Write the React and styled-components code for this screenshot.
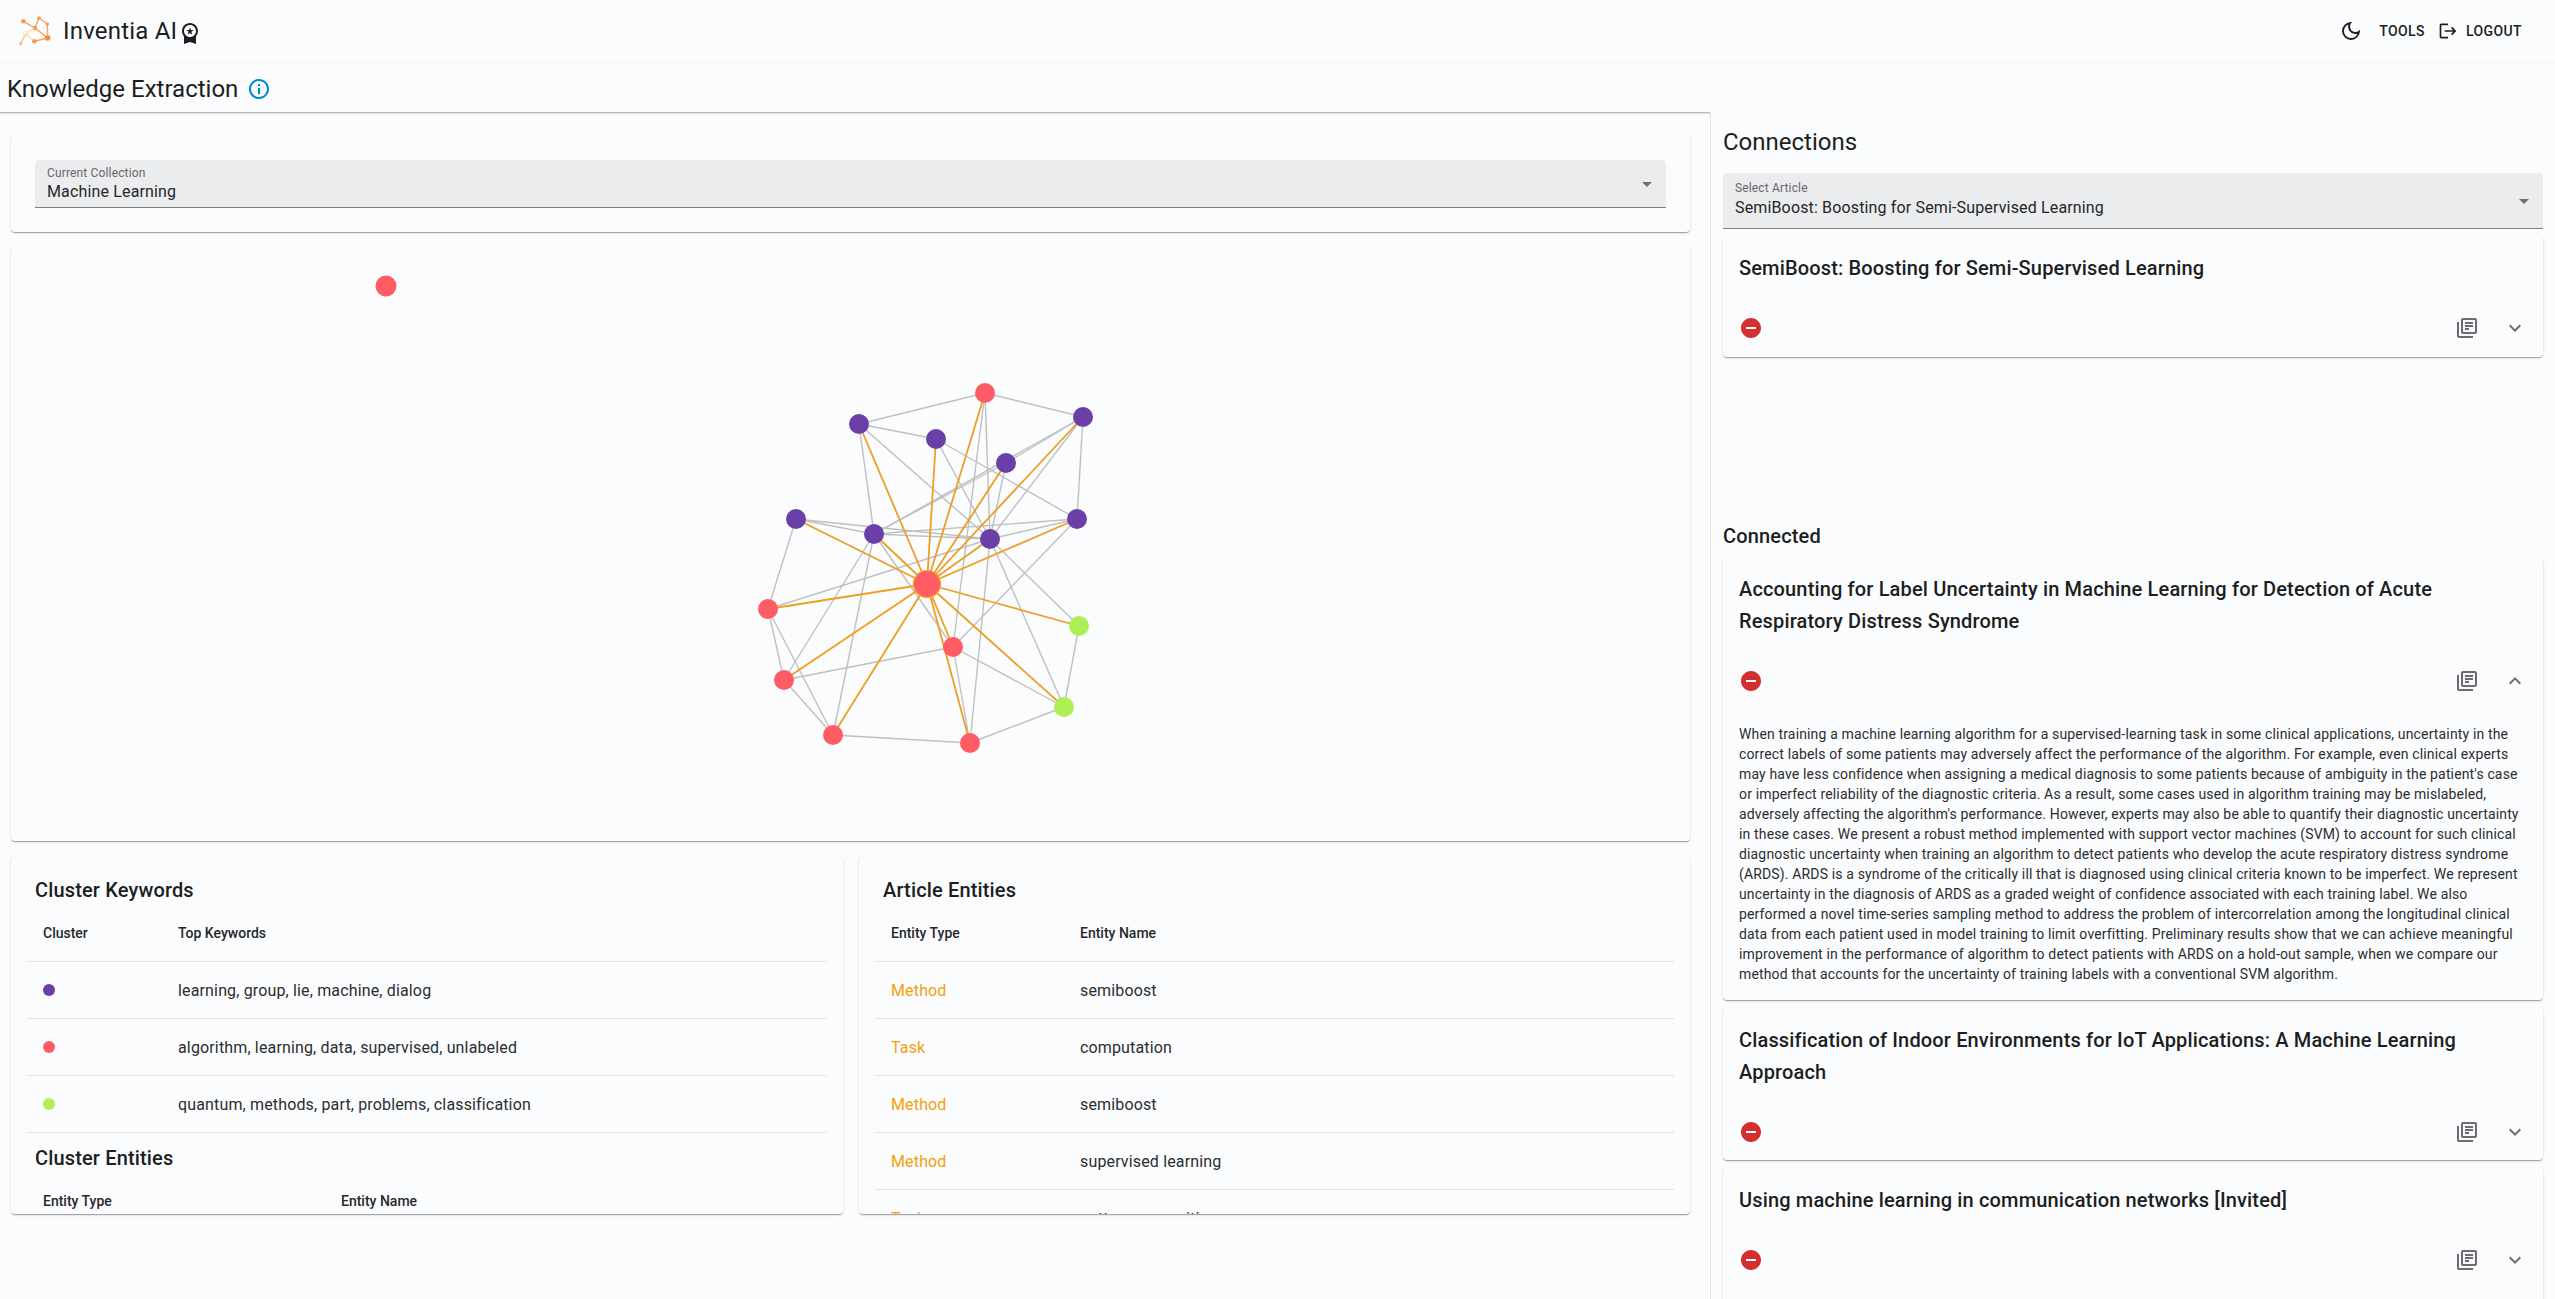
import React from "react";
import styled, { createGlobalStyle } from "styled-components";
import {
  MdOutlineDarkMode,
  MdLogout,
  MdInfoOutline,
  MdRemoveCircle,
  MdOutlineLibraryBooks,
  MdExpandMore,
  MdExpandLess,
  MdArrowDropDown,
  MdWorkspacePremium,
} from "react-icons/md";

const BG = "#fbfcfe";
const TEXT = "#1c1e21";
const ORANGE = "#f59e0b";
const PURPLE = "#6b3fa8";
const RED = "#ff5c66";
const GREEN = "#aeef55";
const CARD_SHADOW =
  "0 2px 1px -1px rgba(0,0,0,.2), 0 1px 1px 0 rgba(0,0,0,.14), 0 1px 3px 0 rgba(0,0,0,.12)";

const GlobalStyle = createGlobalStyle`
  html, body {
    margin: 0;
    padding: 0;
    height: 100%;
    overflow: hidden;
    background: ${BG};
  }
  * {
    box-sizing: border-box;
  }
  body {
    font-family: Roboto, "Liberation Sans", sans-serif;
    color: ${TEXT};
  }
`;

const Page = styled.div`
  height: 100vh;
  display: flex;
  flex-direction: column;
  overflow: hidden;
  background: ${BG};
`;

const Header = styled.header`
  height: 63px;
  flex: none;
  display: flex;
  align-items: center;
  justify-content: space-between;
  padding: 0 33px 0 17px;
  border-bottom: 1px solid #f2f3f5;
`;

const Brand = styled.div`
  display: flex;
  align-items: center;
`;

const BrandName = styled.span`
  margin-left: 10px;
  font-size: 24px;
  line-height: 32px;
  letter-spacing: 0.2px;
`;

const BadgeIcon = styled(MdWorkspacePremium)`
  margin: 3px 0 0 1px;
  font-size: 24px;
`;

const HeaderActions = styled.div`
  display: flex;
  align-items: center;
`;

const ThemeToggle = styled.span`
  display: flex;
  margin-right: 16px;
  font-size: 24px;
`;

const NavButton = styled.span`
  display: flex;
  align-items: center;
  margin-left: ${(p) => p.$gap || 0}px;
  font-size: 14px;
  font-weight: 500;
  letter-spacing: 0.4px;
  svg {
    margin-right: 8px;
    font-size: 20px;
  }
`;

const Body = styled.div`
  flex: 1;
  min-height: 0;
  display: flex;
`;

const LeftColumn = styled.main`
  width: 1710px;
  flex: none;
`;

const TitleBar = styled.div`
  height: 50px;
  display: flex;
  align-items: center;
  padding: 3px 0 0 7px;
  border-bottom: 1px solid #b9babc;
  box-shadow: 0 1px 1px rgba(0, 0, 0, 0.1);
`;

const PageTitle = styled.h1`
  margin: 0;
  font-size: 24px;
  font-weight: 400;
  line-height: 32px;
`;

const InfoIcon = styled(MdInfoOutline)`
  margin-left: 9px;
  font-size: 24px;
  color: #0288d1;
`;

const Content = styled.div`
  display: flex;
  flex-direction: column;
  gap: 15px;
  padding: 22px 20px 0 11px;
`;

const Card = styled.section`
  background: ${BG};
  border-radius: 4px;
  box-shadow: ${CARD_SHADOW};
`;

const SelectCard = styled(Card)`
  height: 97px;
  padding: 25px 24px 0;
`;

const SelectBox = styled.div`
  position: relative;
  height: ${(p) => p.$height}px;
  padding: ${(p) => p.$pad}px 12px 0;
  background: #ebecee;
  border-radius: 4px 4px 0 0;
  border-bottom: 1px solid #7d7e80;
`;

const SelectLabel = styled.div`
  font-size: 12px;
  line-height: 14px;
  letter-spacing: 0.15px;
  color: #66686b;
`;

const SelectValue = styled.div`
  margin-top: ${(p) => p.$gap}px;
  font-size: 16px;
  line-height: 20px;
  letter-spacing: 0.15px;
  color: #24262a;
`;

const Caret = styled(MdArrowDropDown)`
  position: absolute;
  right: 7px;
  top: 50%;
  transform: translateY(-50%);
  font-size: 24px;
  color: #6f7073;
`;

const GraphCard = styled(Card)`
  height: 594px;
  svg {
    display: block;
  }
`;

const LowerRow = styled.div`
  display: grid;
  grid-template-columns: 832px 831px;
  gap: 16px;
  margin-top: 1px;
`;

const TableCard = styled(Card)`
  height: 357px;
  overflow: hidden;
  padding: 16px;
`;

const CardHeading = styled.h2`
  margin: ${(p) => p.$top || 0}px 0 5px 8px;
  font-size: 20px;
  font-weight: 500;
  line-height: 20px;
  letter-spacing: 0.15px;
  color: ${TEXT};
`;

const Table = styled.div`
  display: grid;
  grid-template-columns: ${(p) => p.$cols};
`;

const HeadCell = styled.div`
  height: 57px;
  display: flex;
  align-items: center;
  padding: 0 16px;
  font-size: 14px;
  font-weight: 500;
  border-bottom: 1px solid #e2e3e5;
  color: #26282b;
`;

const Cell = styled.div`
  height: 57px;
  display: flex;
  align-items: center;
  padding: 0 16px;
  font-size: 16px;
  letter-spacing: 0.15px;
  color: ${(p) => p.$color || "#2b2d30"};
  border-bottom: 1px solid #e2e3e5;
`;

const Dot = styled.span`
  width: 12px;
  height: 12px;
  border-radius: 50%;
  background: ${(p) => p.$color};
`;

const RightPanel = styled.aside`
  flex: 1;
  min-width: 0;
  margin-top: 50px;
  padding: 0 12px 0 12px;
  border-left: 1px solid #e2e3e5;
`;

const PanelTitle = styled.h2`
  margin: 13px 0 15px;
  font-size: 24px;
  font-weight: 400;
  line-height: 32px;
`;

const ArticleList = styled.div`
  display: flex;
  flex-direction: column;
  gap: 8px;
`;

const ArticleCard = styled(Card)`
  margin-top: ${(p) => p.$top || 0}px;
  padding-bottom: ${(p) => p.$bottom || 0}px;
`;

const ArticleTitle = styled.h3`
  margin: 0;
  padding: 16px 16px 0;
  font-size: 20px;
  font-weight: 500;
  line-height: 32px;
  letter-spacing: 0.15px;
  color: ${TEXT};
`;

const ArticleActions = styled.div`
  display: flex;
  align-items: center;
  height: 56px;
  margin-top: 16px;
  padding: 0 16px;
`;

const RemoveIcon = styled(MdRemoveCircle)`
  font-size: 24px;
  color: #d32f2f;
`;

const BookIcon = styled(MdOutlineLibraryBooks)`
  margin-left: auto;
  font-size: 24px;
  color: #6b6d70;
`;

const ChevronSlot = styled.span`
  display: flex;
  margin-left: 24px;
  font-size: 24px;
  color: #6b6d70;
`;

const Abstract = styled.p`
  margin: 0;
  padding: 15px 16px 16px;
  font-size: 14px;
  line-height: 20px;
  letter-spacing: 0.15px;
  color: #2b2d30;
`;

const ConnectedHeading = styled.h3`
  margin: 167px 0 9px;
  font-size: 20px;
  font-weight: 500;
  line-height: 24px;
  letter-spacing: 0.15px;
`;

const Logo = () => (
  <svg width="36" height="36" viewBox="17 14 36 36">
    <g stroke="#f7a45c" strokeWidth="1.4" fill="none">
      <path d="M23.3 22.3 35 29 39 19 47.3 25 47.7 39 35 29M34.3 42.3 47.7 39" />
      <path d="M25.7 35 20.7 44.7" stroke="#fbc189" />
      <path d="M35 29 25.7 35 34.3 42.3" stroke="#fbdcbc" />
    </g>
    <g fill="#f89a4c">
      <circle cx="23.3" cy="22.3" r="2.2" />
      <circle cx="39" cy="19" r="1.8" />
      <circle cx="47.3" cy="25" r="1.8" />
      <circle cx="35" cy="29" r="2.2" />
      <circle cx="47.7" cy="39" r="2.7" fill="#f78d3a" />
      <circle cx="34.3" cy="42.3" r="2.2" />
      <circle cx="20.7" cy="44.7" r="1.6" fill="#fbb87c" />
    </g>
    <circle cx="25.7" cy="35" r="2.8" fill="none" stroke="#fbe3cc" strokeWidth="0.9" />
  </svg>
);

// node positions read off the picture, in page pixels
const NODES = {
  r0: [985, 393, RED],
  p1: [859, 424, PURPLE],
  p2: [936, 439, PURPLE],
  p3: [1083, 417, PURPLE],
  p4: [1006, 463, PURPLE],
  p5: [796, 519, PURPLE],
  p6: [874, 534, PURPLE],
  p7: [990, 539, PURPLE],
  p8: [1077, 519, PURPLE],
  r9: [768, 609, RED],
  g10: [1079, 626, GREEN],
  r11: [953, 647, RED],
  r12: [784, 680, RED],
  g13: [1064, 707, GREEN],
  r14: [833, 735, RED],
  r15: [970, 743, RED],
};
const CENTER = [927, 584];

const GREY_EDGES = [
  ["r0", "p1"], ["r0", "p3"], ["r0", "p7"], ["r0", "r11"],
  ["p1", "p2"], ["p1", "p6"], ["p1", "p7"],
  ["p2", "p7"], ["p2", "p8"],
  ["p3", "p4"], ["p3", "p6"], ["p3", "p8"], ["p3", "p7"],
  ["p4", "p6"], ["p4", "p7"],
  ["p5", "p6"], ["p5", "p7"], ["p5", "r9"],
  ["p6", "p7"], ["p6", "p8"], ["p6", "r11"], ["p6", "r12"], ["p6", "r14"],
  ["p7", "p8"], ["p7", "g10"], ["p7", "g13"], ["p7", "r9"], ["p7", "r15"],
  ["p8", "r11"],
  ["r9", "r12"], ["r9", "r14"],
  ["r11", "r12"], ["r11", "g13"], ["r11", "r15"],
  ["r12", "r14"], ["r14", "r15"], ["r15", "g13"], ["g10", "g13"],
];

const Graph = () => (
  <svg width="1679" height="594" viewBox="11 247 1679 594">
    {GREY_EDGES.map(([a, b]) => (
      <line
        key={a + b}
        x1={NODES[a][0]}
        y1={NODES[a][1]}
        x2={NODES[b][0]}
        y2={NODES[b][1]}
        stroke="#bfc0c2"
        strokeWidth="1.4"
      />
    ))}
    {Object.keys(NODES).map((id) => (
      <line
        key={id}
        x1={CENTER[0]}
        y1={CENTER[1]}
        x2={NODES[id][0]}
        y2={NODES[id][1]}
        stroke="#ee9e22"
        strokeWidth="1.8"
      />
    ))}
    {Object.keys(NODES).map((id) => (
      <circle key={id} cx={NODES[id][0]} cy={NODES[id][1]} r="10" fill={NODES[id][2]} />
    ))}
    <circle cx={CENTER[0]} cy={CENTER[1]} r="13.5" fill={RED} stroke="#f8a21e" strokeWidth="1.2" />
    <circle cx="386" cy="286" r="10.5" fill={RED} />
  </svg>
);

const keywordRows = [
  [PURPLE, "learning, group, lie, machine, dialog"],
  [RED, "algorithm, learning, data, supervised, unlabeled"],
  [GREEN, "quantum, methods, part, problems, classification"],
];

const entityRows = [
  ["Method", "semiboost"],
  ["Task", "computation"],
  ["Method", "semiboost"],
  ["Method", "supervised learning"],
  ["Task", "pattern recognition"],
];

const ABSTRACT =
  "When training a machine learning algorithm for a supervised-learning task in some clinical applications, uncertainty in the correct labels of some patients may adversely affect the performance of the algorithm. For example, even clinical experts may have less confidence when assigning a medical diagnosis to some patients because of ambiguity in the patient's case or imperfect reliability of the diagnostic criteria. As a result, some cases used in algorithm training may be mislabeled, adversely affecting the algorithm's performance. However, experts may also be able to quantify their diagnostic uncertainty in these cases. We present a robust method implemented with support vector machines (SVM) to account for such clinical diagnostic uncertainty when training an algorithm to detect patients who develop the acute respiratory distress syndrome (ARDS). ARDS is a syndrome of the critically ill that is diagnosed using clinical criteria known to be imperfect. We represent uncertainty in the diagnosis of ARDS as a graded weight of confidence associated with each training label. We also performed a novel time-series sampling method to address the problem of intercorrelation among the longitudinal clinical data from each patient used in model training to limit overfitting. Preliminary results show that we can achieve meaningful improvement in the performance of algorithm to detect patients with ARDS on a hold-out sample, when we compare our method that accounts for the uncertainty of training labels with a conventional SVM algorithm.";

const Article = ({ title, open, abstract, top, bottom }) => (
  <ArticleCard $top={top} $bottom={bottom}>
    <ArticleTitle>{title}</ArticleTitle>
    <ArticleActions>
      <RemoveIcon />
      <BookIcon />
      <ChevronSlot>{open ? <MdExpandLess /> : <MdExpandMore />}</ChevronSlot>
    </ArticleActions>
    {abstract && <Abstract>{abstract}</Abstract>}
  </ArticleCard>
);

const App = () => (
  <Page>
    <GlobalStyle />
    <Header>
      <Brand>
        <Logo />
        <BrandName>Inventia AI</BrandName>
        <BadgeIcon />
      </Brand>
      <HeaderActions>
        <ThemeToggle>
          <MdOutlineDarkMode />
        </ThemeToggle>
        <NavButton>TOOLS</NavButton>
        <NavButton $gap={13}>
          <MdLogout />
          LOGOUT
        </NavButton>
      </HeaderActions>
    </Header>
    <Body>
      <LeftColumn>
        <TitleBar>
          <PageTitle>Knowledge Extraction</PageTitle>
          <InfoIcon />
        </TitleBar>
        <Content>
          <SelectCard>
            <SelectBox $height={48} $pad={6}>
              <SelectLabel>Current Collection</SelectLabel>
              <SelectValue $gap={2}>Machine Learning</SelectValue>
              <Caret />
            </SelectBox>
          </SelectCard>
          <GraphCard>
            <Graph />
          </GraphCard>
          <LowerRow>
            <TableCard>
              <CardHeading $top={7}>Cluster Keywords</CardHeading>
              <Table $cols="135px 1fr">
                <HeadCell>Cluster</HeadCell>
                <HeadCell>Top Keywords</HeadCell>
                {keywordRows.map(([color, words]) => (
                  <React.Fragment key={color}>
                    <Cell>
                      <Dot $color={color} />
                    </Cell>
                    <Cell>{words}</Cell>
                  </React.Fragment>
                ))}
              </Table>
              <CardHeading $top={15}>Cluster Entities</CardHeading>
              <Table $cols="298px 1fr">
                <HeadCell>Entity Type</HeadCell>
                <HeadCell>Entity Name</HeadCell>
              </Table>
            </TableCard>
            <TableCard>
              <CardHeading $top={7}>Article Entities</CardHeading>
              <Table $cols="189px 1fr">
                <HeadCell>Entity Type</HeadCell>
                <HeadCell>Entity Name</HeadCell>
                {entityRows.map(([type, name], i) => (
                  <React.Fragment key={i}>
                    <Cell $color={ORANGE}>{type}</Cell>
                    <Cell>{name}</Cell>
                  </React.Fragment>
                ))}
              </Table>
            </TableCard>
          </LowerRow>
        </Content>
      </LeftColumn>
      <RightPanel>
        <PanelTitle>Connections</PanelTitle>
        <SelectBox $height={56} $pad={8}>
          <SelectLabel>Select Article</SelectLabel>
          <SelectValue $gap={3}>SemiBoost: Boosting for Semi-Supervised Learning</SelectValue>
          <Caret />
        </SelectBox>
        <ArticleList>
          <Article top={7} bottom={1} title="SemiBoost: Boosting for Semi-Supervised Learning" />
        </ArticleList>
        <ConnectedHeading>Connected</ConnectedHeading>
        <ArticleList>
          <Article
            title="Accounting for Label Uncertainty in Machine Learning for Detection of Acute Respiratory Distress Syndrome"
            open
            abstract={ABSTRACT}
          />
          <Article title="Classification of Indoor Environments for IoT Applications: A Machine Learning Approach" />
          <Article bottom={40} title="Using machine learning in communication networks [Invited]" />
        </ArticleList>
      </RightPanel>
    </Body>
  </Page>
);

export default App;
